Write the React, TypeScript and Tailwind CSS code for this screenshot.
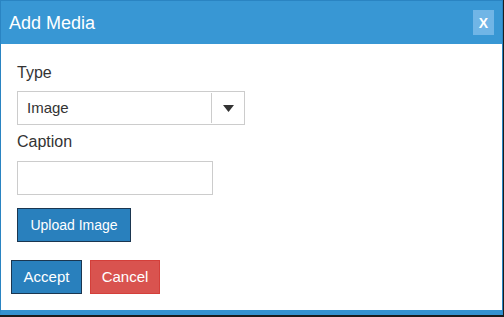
import React from "react";

export default function App() {
  const font = { fontFamily: '"Liberation Sans", Arial, sans-serif' };
  return (
    <div className="w-[504px] h-[317px] bg-[#1c1c1c]" style={font}>
      <div className="w-[503px] h-[315px] bg-white border border-[#2a84c2] border-b-[5px] border-b-[#3592d0] flex flex-col">
        <div className="h-[43px] bg-[#3897d4] flex items-center justify-between pl-[8px] pr-[8px]">
          <span className="text-[18px] text-white leading-none">Add Media</span>
          <div className="w-[21px] h-[25px] bg-[#70b5e6] flex items-center justify-center text-white font-bold text-[14px] leading-none">
            X
          </div>
        </div>
        <div className="flex flex-col items-start pl-[16px] pt-[18px]">
          <div className="text-[16px] leading-[22px] text-[#333]">Type</div>
          <div className="mt-[7px] w-[228px] h-[34px] border border-[#cccccc] flex items-center">
            <div className="flex-1 pl-[9px] text-[15px] text-[#333]">Image</div>
            <div className="w-px h-[30px] bg-[#cccccc]" />
            <div className="w-[32px] flex items-center justify-center">
              <svg width="11" height="7" viewBox="0 0 11 7">
                <path d="M0 0 L11 0 L5.5 7 Z" fill="#333" />
              </svg>
            </div>
          </div>
          <div className="mt-[6px] text-[16px] leading-[22px] text-[#333]">Caption</div>
          <div className="mt-[8px] w-[196px] h-[34px] border border-[#cccccc]" />
          <button className="mt-[13px] w-[114px] h-[34px] bg-[#2980bd] border border-[#1b3650] text-white text-[14px]">
            Upload Image
          </button>
        </div>
        <div className="flex pl-[10px] pt-[18px] gap-[8px]">
          <button className="w-[71px] h-[34px] bg-[#2980bd] border border-[#1b3650] text-white text-[15px]">
            Accept
          </button>
          <button className="w-[70px] h-[34px] bg-[#d9534f] border border-[#d43f3a] text-white text-[15px]">
            Cancel
          </button>
        </div>
      </div>
    </div>
  );
}
